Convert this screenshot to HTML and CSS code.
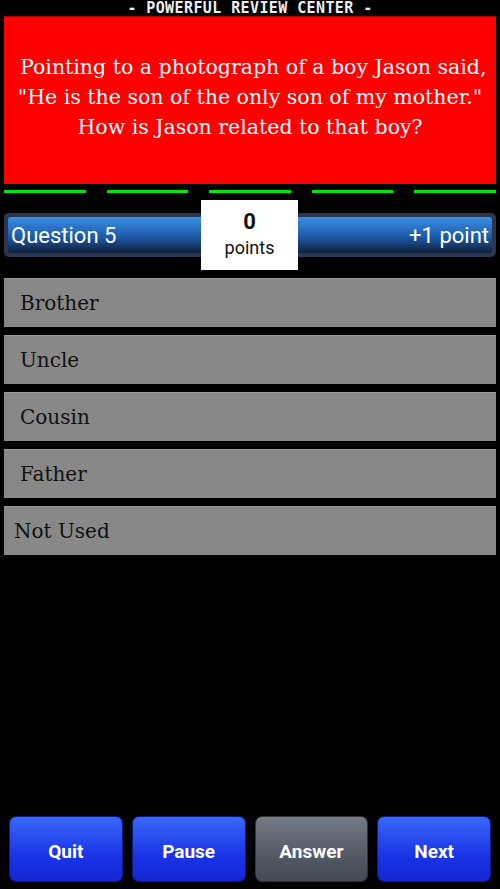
FILE: index.html
```html
<!DOCTYPE html>
<html lang="en">
<head>
  <meta charset="UTF-8" />
  <meta name="viewport" content="width=device-width, initial-scale=1.0" />
  <title>Powerful Review Center</title>
  <link rel="stylesheet" href="styles.css">
</head>
<body>
  <div class="screen">
    <div class="brand">- POWERFUL REVIEW CENTER -</div>

    <div class="question">
      <p>&nbsp;Pointing to a photograph of a boy Jason said, "He is the son of the only son of my mother." How is Jason related to that boy?</p>
    </div>

    <div class="timer">
      <span></span><span></span><span></span><span></span><span></span>
    </div>

    <div class="scorebar">
      <div class="scorebar-inner">
        <span>Question 5</span>
        <span>+1 point</span>
      </div>
      <div class="score">
        <b>0</b>
        <span>points</span>
      </div>
    </div>

    <div class="answers">
      <div class="answer">Brother</div>
      <div class="answer">Uncle</div>
      <div class="answer">Cousin</div>
      <div class="answer">Father</div>
      <div class="answer unused">Not Used</div>
    </div>

    <div class="controls">
      <button class="btn">Quit</button>
      <button class="btn">Pause</button>
      <button class="btn grey">Answer</button>
      <button class="btn">Next</button>
    </div>
  </div>
</body>
</html>
```

FILE: styles.css
```css
body { margin: 0; background: #000; font-family: Roboto, "Liberation Sans", sans-serif; }
.screen { width: 500px; height: 889px; display: flex; flex-direction: column; }

.brand { height: 16px; line-height: 17px; text-align: center; color: #eee; font-family: "DejaVu Sans Mono", monospace; font-weight: bold; font-size: 15px; letter-spacing: 0.4px; }

.question { margin: 0 4px; height: 168px; background: #ff0000; border-top: 1px solid #b00000; box-sizing: border-box; display: flex; align-items: center; justify-content: center; padding: 0 4px 7px; }
.question p { margin: 0; color: #fff; text-align: center; font-family: "DejaVu Serif", serif; font-size: 20.5px; line-height: 30px; }

.timer { display: flex; gap: 21px; margin: 6px 4px 0; }
.timer span { flex: 1; height: 3px; background: #00e600; }

.scorebar { position: relative; margin: 20px 4px 0; height: 44px; background: #2b3752; border-radius: 5px; padding: 4px; box-sizing: border-box; }
.scorebar-inner { height: 100%; border-radius: 3px; background: linear-gradient(#3b8fe6, #1d5aa8 55%, #0f1f38); display: flex; align-items: center; justify-content: space-between; padding: 1px 3px 0 3px; box-sizing: border-box; color: #fff; font-size: 22px; }
.score { position: absolute; left: 197px; top: -13px; width: 97px; height: 70px; background: #fff; display: flex; flex-direction: column; align-items: center; justify-content: center; color: #111; }
.score b { font-size: 22px; line-height: 26px; }
.score span { font-size: 18px; line-height: 26px; }

.answers { display: flex; flex-direction: column; gap: 8px; margin: 21px 4px 0; }
.answer { height: 49px; background: #888; border-top: 1px solid #999; box-sizing: border-box; display: flex; align-items: center; padding-left: 16px; font-family: "DejaVu Serif", serif; font-size: 20px; color: #111; }
.answer.unused { padding-left: 10px; }

.controls { margin-top: auto; display: flex; gap: 9px; padding: 0 9px 7px; }
.btn { flex: 1; height: 66px; border: 1px solid #0a1a80; border-radius: 7px; background: linear-gradient(#3a68f8, #1a34e6 60%, #1226d4); color: #fff; font-family: Roboto, sans-serif; font-weight: bold; font-size: 19px; padding-top: 6px; }
.btn.grey { background: linear-gradient(#747b86, #4e5560 70%, #454b55); border-color: #333; }
```
